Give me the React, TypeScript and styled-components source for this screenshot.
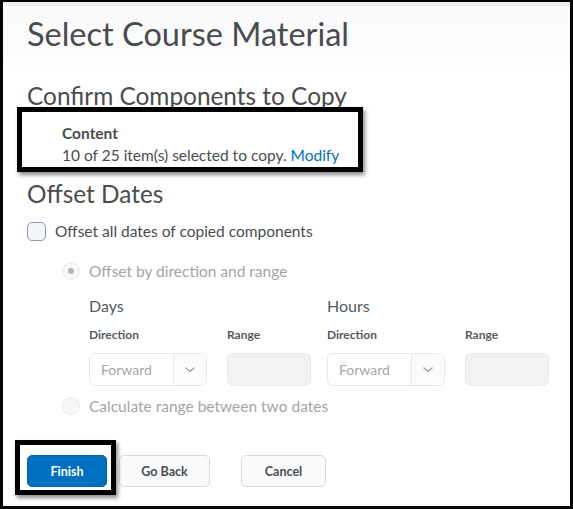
import React from 'react';
import styled, { createGlobalStyle } from 'styled-components';

const Global = createGlobalStyle`
  html, body { margin: 0; padding: 0; background: #fff; }
  body { font-family: Lato, "Open Sans", sans-serif; color: #494c4e; }
  *, *::before, *::after { box-sizing: border-box; }
`;

const Frame = styled.div`
  width: 573px;
  height: 509px;
  border: 3px solid #000;
  border-top-width: 2px;
  background: #fff;
  overflow: hidden;
  display: flex;
  flex-direction: column;
`;

const Header = styled.header`
  height: 68px;
  border-top: 4px solid #eceef0;
  background: linear-gradient(#f9fafb, #fbfbfc 70%, #fff);
  padding: 8px 0 0 24px;
`;

const Title = styled.h1`
  margin: 0;
  font-size: 32.5px;
  line-height: 40px;
  font-weight: 400;
  color: #494c4e;
`;

const Main = styled.main`
  padding: 0 20px 0 24px;
  display: flex;
  flex-direction: column;
  align-items: flex-start;
`;

const SectionHeading = styled.h2<{ $top: number }>`
  margin: ${p => p.$top}px 0 0;
  font-size: 24.4px;
  line-height: 29px;
  font-weight: 400;
  color: #494c4e;
`;

const Highlight = styled.div`
  position: relative;
  &::after {
    content: '';
    position: absolute;
    border: 5px solid #000;
    box-shadow: 2px 3px 4px rgba(0, 0, 0, 0.45);
    pointer-events: none;
  }
`;

const Summary = styled(Highlight)`
  margin-top: 12px;
  padding-left: 35px;
  font-size: 15.5px;
  line-height: 22px;
  &::after {
    top: -15px;
    left: -10px;
    width: 346px;
    height: 65px;
  }
`;

const SummaryTitle = styled.div`
  font-weight: 700;
`;

const Link = styled.a`
  color: #006fbf;
  text-decoration: none;
`;

const CheckRow = styled.label`
  margin-top: 12px;
  display: flex;
  align-items: center;
  gap: 9px;
  font-size: 15.5px;
  line-height: 22px;
  color: #494c4e;
`;

const Checkbox = styled.span`
  width: 19px;
  height: 19px;
  border-radius: 5px;
  border: 1px solid #8a9bb3;
  background: #f2f5fa;
`;

const RadioRow = styled.label<{ $top: number }>`
  margin: ${p => p.$top}px 0 0 35px;
  display: flex;
  align-items: center;
  gap: 9px;
  font-size: 15.5px;
  line-height: 22px;
  color: #a2a5a8;
`;

const Radio = styled.span<{ $checked?: boolean }>`
  width: 18px;
  height: 18px;
  border-radius: 50%;
  border: 1px solid #e8eaec;
  background: #f6f7f8;
  display: flex;
  align-items: center;
  justify-content: center;
  &::after {
    content: '';
    width: 6px;
    height: 6px;
    border-radius: 50%;
    background: ${p => (p.$checked ? '#b3b6b9' : 'transparent')};
  }
`;

const Groups = styled.div`
  margin: 13px 0 0 62px;
  display: flex;
  gap: 16px;
`;

const Group = styled.div`
  display: grid;
  grid-template-columns: 118px 84px;
  column-gap: 20px;
`;

const GroupTitle = styled.div`
  grid-column: 1 / span 2;
  font-size: 16px;
  line-height: 22px;
  color: #565a5c;
`;

const FieldLabel = styled.div`
  margin-top: 9px;
  font-size: 12px;
  line-height: 18px;
  font-weight: 700;
  color: #565a5c;
`;

const Select = styled.div`
  margin-top: 9px;
  height: 33px;
  display: flex;
  border: 1px solid #e6e8eb;
  border-radius: 6px;
  background: #fff;
  overflow: hidden;
`;

const SelectValue = styled.span`
  flex: 1;
  padding-left: 11px;
  display: flex;
  align-items: center;
  font-size: 14px;
  color: #a4a7aa;
`;

const SelectArrow = styled.span`
  width: 33px;
  border-left: 1px solid #e6e8eb;
  background: #fafbfb;
  display: flex;
  align-items: center;
  justify-content: center;
`;

const RangeInput = styled.div`
  margin-top: 9px;
  height: 33px;
  border: 1px solid #e6e8eb;
  border-radius: 6px;
  background: #f2f2f3;
`;

const Buttons = styled.div`
  margin-top: 38px;
  display: flex;
  align-items: center;
`;

const FinishWrap = styled(Highlight)`
  margin-right: 12px;
  &::after {
    top: -15px;
    left: -12px;
    width: 101px;
    height: 55px;
  }
`;

const Button = styled.button<{ $primary?: boolean; $w: number; $ml?: number }>`
  width: ${p => p.$w}px;
  height: 32px;
  margin-left: ${p => p.$ml ?? 0}px;
  border-radius: 5px;
  border: 1px solid ${p => (p.$primary ? '#0064ad' : '#d6dbe2')};
  background: ${p => (p.$primary ? '#006fbf' : '#f9fafb')};
  color: ${p => (p.$primary ? '#fff' : '#494c4e')};
  font-family: Lato, "Open Sans", sans-serif;
  font-size: 12.5px;
  font-weight: 700;
  padding: 0;
  display: block;
`;

const Chevron = () => (
  <svg width="10" height="6" viewBox="0 0 10 6">
    <path d="M1 1l4 3.5L9 1" fill="none" stroke="#a4a7aa" strokeWidth="1.6" strokeLinecap="round" strokeLinejoin="round" />
  </svg>
);

const DateGroup = ({ title }: { title: string }) => (
  <Group>
    <GroupTitle>{title}</GroupTitle>
    <FieldLabel>Direction</FieldLabel>
    <FieldLabel>Range</FieldLabel>
    <Select>
      <SelectValue>Forward</SelectValue>
      <SelectArrow>
        <Chevron />
      </SelectArrow>
    </Select>
    <RangeInput />
  </Group>
);

export default function App() {
  return (
    <>
      <Global />
      <Frame>
        <Header>
          <Title>Select Course Material</Title>
        </Header>
        <Main>
          <SectionHeading $top={11}>Confirm Components to Copy</SectionHeading>
          <Summary>
            <SummaryTitle>Content</SummaryTitle>
            <div>
              10 of 25 item(s) selected to copy. <Link href="#">Modify</Link>
            </div>
          </Summary>
          <SectionHeading $top={13}>Offset Dates</SectionHeading>
          <CheckRow>
            <Checkbox />
            Offset all dates of copied components
          </CheckRow>
          <RadioRow $top={18}>
            <Radio $checked />
            Offset by direction and range
          </RadioRow>
          <Groups>
            <DateGroup title="Days" />
            <DateGroup title="Hours" />
          </Groups>
          <RadioRow $top={9}>
            <Radio />
            Calculate range between two dates
          </RadioRow>
          <Buttons>
            <FinishWrap>
              <Button $primary $w={80}>Finish</Button>
            </FinishWrap>
            <Button $w={91}>Go Back</Button>
            <Button $w={85} $ml={31}>Cancel</Button>
          </Buttons>
        </Main>
      </Frame>
    </>
  );
}
